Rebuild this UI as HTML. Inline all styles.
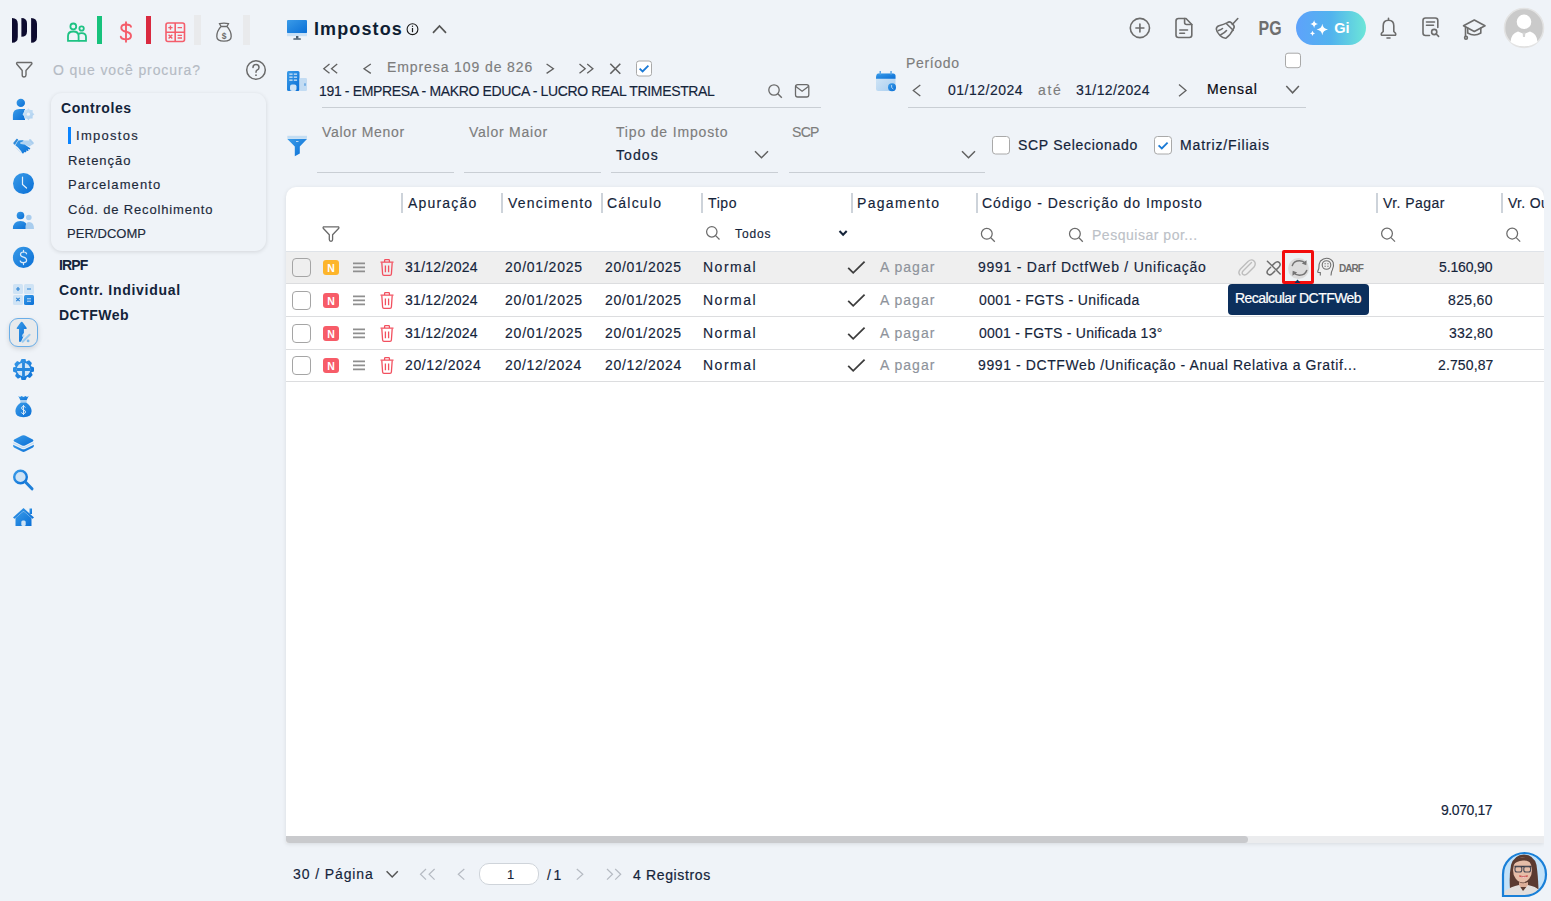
<!DOCTYPE html>
<html lang="pt-BR"><head><meta charset="utf-8"><title>Impostos</title>
<style>
html,body{margin:0;padding:0;}
body{width:1551px;height:901px;overflow:hidden;background:#eff3f8;position:relative;font-family:"Liberation Sans",sans-serif;}
.t{position:absolute;white-space:nowrap;line-height:1;}
.a{position:absolute;}
svg{position:absolute;overflow:visible;}
</style></head><body>
<!-- sidebar dropdown card -->
<div class="a" style="left:51px;top:93px;width:215px;height:158px;border-radius:11px;background:#eff3f8;box-shadow:0 1px 4px rgba(0,0,0,0.12)"></div>
<div class="a" style="left:68px;top:127px;width:3px;height:17px;background:#0a84ff"></div>
<!-- selected left icon box -->
<div class="a" style="left:9px;top:318px;width:27px;height:27px;border:1.3px solid #6aaee8;border-radius:9px;background:#e8eaec;box-shadow:0 2px 5px rgba(0,0,0,0.13)"></div>

<!-- table card -->
<div class="a" style="left:286px;top:187px;width:1258px;height:656px;background:#fff;border-radius:10px 10px 0 0;box-shadow:0 1px 4px rgba(0,0,0,0.10)"></div>
<div class="a" style="left:286px;top:251px;width:1258px;height:1px;background:#dfe3e8"></div>
<div class="a" style="left:286px;top:252px;width:1258px;height:31px;background:#efefef"></div>
<div class="a" style="left:286px;top:283px;width:1258px;height:1px;background:#dcdddf"></div>
<div class="a" style="left:286px;top:316px;width:1258px;height:1px;background:#dcdddf"></div>
<div class="a" style="left:286px;top:349px;width:1258px;height:1px;background:#dcdddf"></div>
<div class="a" style="left:286px;top:381px;width:1258px;height:1px;background:#dcdddf"></div>
<!-- scrollbar -->
<div class="a" style="left:286px;top:836px;width:1258px;height:7px;background:#ebecee"></div>
<div class="a" style="left:286px;top:836px;width:962px;height:7px;background:#c9cacd;border-radius:0 4px 4px 4px"></div>
<!-- column separators -->
<div class="a" style="left:401px;top:193px;width:2px;height:20px;background:#cdd3da"></div>
<div class="a" style="left:501px;top:193px;width:2px;height:20px;background:#cdd3da"></div>
<div class="a" style="left:601px;top:193px;width:2px;height:20px;background:#cdd3da"></div>
<div class="a" style="left:701px;top:193px;width:2px;height:20px;background:#cdd3da"></div>
<div class="a" style="left:851px;top:193px;width:2px;height:20px;background:#cdd3da"></div>
<div class="a" style="left:976px;top:193px;width:2px;height:20px;background:#cdd3da"></div>
<div class="a" style="left:1376px;top:193px;width:2px;height:20px;background:#cdd3da"></div>
<div class="a" style="left:1501px;top:193px;width:2px;height:20px;background:#cdd3da"></div>

<!-- underlines -->
<div class="a" style="left:322px;top:107px;width:499px;height:1px;background:#c9ced4"></div>
<div class="a" style="left:908px;top:107px;width:398px;height:1px;background:#c9ced4"></div>
<div class="a" style="left:317px;top:172px;width:137px;height:1px;background:#c9ced4"></div>
<div class="a" style="left:464px;top:172px;width:137px;height:1px;background:#c9ced4"></div>
<div class="a" style="left:611px;top:172px;width:167px;height:1px;background:#c9ced4"></div>
<div class="a" style="left:789px;top:172px;width:196px;height:1px;background:#c9ced4"></div>

<!-- tooltip -->
<div class="a" style="left:1228px;top:284px;width:141px;height:31px;background:#0c2f5c;border-radius:4px"></div>
<!-- red box -->
<div class="a" style="left:1282px;top:250px;width:26px;height:28px;border:3px solid #f20c0c;border-radius:2px;background:#eef2f4"></div>
<div class="a" style="left:1288px;top:258px;width:21px;height:21px;border-radius:50%;background:#dcdcdc"></div>

<!-- footer input -->
<div class="a" style="left:479px;top:863px;width:58px;height:20px;border:1px solid #cfd4da;border-radius:10px;background:#fff"></div>
<!-- avatar bubble -->
<svg style="left:1501px;top:851px" width="47" height="47" viewBox="0 0 47 47">
<defs><clipPath id="bub"><path d="M2 45 L2 23.5 A21.5 21.5 0 1 1 23.5 45 Z"/></clipPath></defs>
<path d="M2 45 L2 23.5 A21.5 21.5 0 1 1 23.5 45 Z" fill="#c2e2f9"/>
<g clip-path="url(#bub)">
<path d="M9 38 Q8 25 10 14 Q13 4 23 3.5 Q33 4 35.5 14 Q37 24 37.5 38 L30 40 L15 40 Z" fill="#5b3b31"/>
<ellipse cx="21.5" cy="19" rx="9.5" ry="12.5" fill="#e6bda8"/>
<path d="M12 12 Q15 6 23 6.5 Q31 7 32 14 Q28 9 22 9.5 Q15 10 12 14 Z" fill="#5b3b31"/>
<path d="M13.5 15.5 L30.5 15.5" stroke="#3b3b45" stroke-width="1.3"/>
<rect x="14" y="15.5" width="6.8" height="5.5" rx="2" fill="none" stroke="#4a4a55" stroke-width="1.1"/>
<rect x="22.8" y="15.5" width="6.8" height="5.5" rx="2" fill="none" stroke="#4a4a55" stroke-width="1.1"/>
<path d="M18.5 25 Q22 28 26.5 25 Q22 26.2 18.5 25 Z" fill="#c43a3a" stroke="#c43a3a" stroke-width="1"/>
<path d="M19.5 25.4 Q22 26.3 25.5 25.4 L25 26.3 Q22 27 20 26.3 Z" fill="#fff"/>
<path d="M18 31 Q22 33.5 27 31 L27 36 L18 36 Z" fill="#dcae98"/>
<path d="M2 47 L4 40 Q10 35.5 18 34 L22 40 L27 34 Q35 35.5 38 39 L40 47 Z" fill="#e2dedc"/>
</g>
<path d="M2 45 L2 23.5 A21.5 21.5 0 1 1 23.5 45 Z" fill="none" stroke="#1a80d8" stroke-width="2.2"/>
</svg>
<!-- ============ ICONS ============ -->
<svg style="left:0;top:0" width="1551" height="901" viewBox="0 0 1551 901">
<defs>
<linearGradient id="bl" x1="0" y1="0" x2="1" y2="1"><stop offset="0" stop-color="#3a9be8"/><stop offset="1" stop-color="#0a6fd6"/></linearGradient>
<linearGradient id="lb" x1="0" y1="0" x2="1" y2="1"><stop offset="0" stop-color="#d6e8f7"/><stop offset="1" stop-color="#a8cdef"/></linearGradient>
<linearGradient id="gi" x1="0" y1="0" x2="1" y2="0"><stop offset="0" stop-color="#5ea2fb"/><stop offset="0.5" stop-color="#52b3ee"/><stop offset="1" stop-color="#6ce6d8"/></linearGradient>
</defs>
<!-- logo -->
<g fill="#0c0a2e">
<path d="M12 18 Q17.8 18 17.8 24 L17.8 37 Q17.8 42.8 12 42.8 Z"/>
<path d="M21.4 18 Q27 18 27 23.5 L27 31.5 Q27 36.8 21.4 36.8 Z"/>
<path d="M31.1 18 Q37 18 37 24 L37 37 Q37 42.8 31.1 42.8 Z"/>
</g>
<!-- people green -->
<g fill="none" stroke="#1ec283" stroke-width="1.8">
<circle cx="73.3" cy="26.4" r="2.9"/>
<circle cx="81.6" cy="28.5" r="2.2"/>
<path d="M68 40.8 L68 36 Q68 31.5 73.3 31.5 Q78.6 31.5 78.6 36 L78.6 40.8 Z"/>
<path d="M78.6 40.8 L86 40.8 L86 37 Q86 33.2 81.6 33.2 Q79.5 33.2 78.6 34.3"/>
</g>
<rect x="97" y="16" width="5" height="28" fill="#17c27c"/>
<!-- dollar -->
<g fill="none" stroke="#f45d6b" stroke-width="1.9" stroke-linecap="round">
<path d="M131 26.8 Q130.5 24.5 126 24.5 Q121.3 24.5 121.3 27.8 Q121.3 30.8 126 31.8 Q131 32.8 131 36 Q131 39.3 126 39.3 Q121.3 39.3 120.8 36.8"/>
<path d="M126 22.3 L126 41.8"/>
</g>
<rect x="146" y="16" width="5" height="28" fill="#d9293f"/>
<!-- calculator -->
<g fill="none" stroke="#f45d6b" stroke-width="1.6">
<rect x="166" y="23" width="18.5" height="18.5" rx="2"/>
<path d="M175.2 23 L175.2 41.5 M166 32.2 L184.5 32.2"/>
</g>
<g stroke="#f45d6b" stroke-width="1.4">
<path d="M168.3 27.6 L172.6 27.6 M170.45 25.5 L170.45 29.7 M177.6 27.6 L182 27.6 M168.6 34.8 L172.3 38.5 M172.3 34.8 L168.6 38.5 M177.6 35.4 L182 35.4 M177.6 38 L182 38"/>
</g>
<rect x="194" y="15" width="7" height="30" fill="#e9eaec"/>
<rect x="243" y="15" width="7" height="30" fill="#e9eaec"/>
<!-- money bag gray -->
<g fill="none" stroke="#6b6b6b" stroke-width="1.3">
<path d="M221 26.5 L219.5 23.6 Q224 22.5 228.5 23.6 L227 26.5"/>
<path d="M221 26.5 L227 26.5 M221 26.5 Q216.8 31 216.8 36.5 Q216.8 41.2 224 41.2 Q231.2 41.2 231.2 36.5 Q231.2 31 227 26.5"/>
</g>
<text x="224" y="38.6" font-family="Liberation Sans" font-size="8.5" font-weight="700" fill="#6b6b6b" text-anchor="middle">$</text>
<!-- filter outline -->
<path d="M17 62.5 L31.5 62.5 Q32.3 63 31.8 64 L26 70.5 L26 75 Q26 76.8 24 77 Q22.2 77 22.2 75 L22.2 70.5 L16.7 64 Q16.2 63 17 62.5 Z" fill="none" stroke="#6a6a6a" stroke-width="1.4" stroke-linejoin="round"/>
<!-- help circle -->
<circle cx="256" cy="70" r="9.3" fill="none" stroke="#6a6a6a" stroke-width="1.5"/>
<path d="M253 67.6 Q253 64.6 256 64.6 Q259 64.6 259 67.4 Q259 69.2 257 70.2 Q256 70.8 256 72.3" fill="none" stroke="#6a6a6a" stroke-width="1.5" stroke-linecap="round"/>
<circle cx="256" cy="75.2" r="0.9" fill="#6a6a6a"/>

<!-- left column icons -->
<g>
<circle cx="20.8" cy="102.9" r="4.2" fill="url(#bl)"/>
<path d="M12.9 120 L12.9 115 Q12.9 109 19.5 109 L25 109 L25 120 Z" fill="url(#bl)"/>
<g transform="translate(28.4 114.2)"><circle r="4.6" fill="url(#lb)" stroke="#eff3f8" stroke-width="1"/><path d="M0 -6 L1.5 -4.2 L4.2 -4.2 L4.2 -1.5 L6 0 L4.2 1.5 L4.2 4.2 L1.5 4.2 L0 6 L-1.5 4.2 L-4.2 4.2 L-4.2 1.5 L-6 0 L-4.2 -1.5 L-4.2 -4.2 L-1.5 -4.2 Z" fill="url(#lb)"/><circle r="1.6" fill="#eff3f8"/></g>
</g>
<!-- handshake -->
<g>
<path d="M13.2 143 L16.6 138.8 Q17.6 138.6 18.2 139.8 L15.2 144.6 Q14 145.2 13.2 143 Z" fill="#2f8ad9"/>
<path d="M29.3 139.2 Q30 138.6 30.8 139.4 L33.8 142.8 Q34 143.8 32.8 144.6 L29.2 141.2 Z" fill="#a9cdee"/>
<path d="M20 142.4 L23 140.6 L29.2 140.6 L32.8 144.2 L29.5 146.6 L24.4 144.6 L20.5 143.8 Z" fill="#b3d3f0"/>
<path d="M15.3 145.2 L18.3 140.6 Q19.5 140 23.3 140.3 Q23.8 141.2 22.5 141.6 L20.2 142.6 Q19.8 143.6 21 143.9 L24.6 144.4 L30.2 148.2 Q30.6 149.2 29.4 149.4 L27.8 148.8 L28.6 150.2 Q28.2 151.2 27 150.8 L26 150.4 L26.4 151.8 Q25.8 152.6 24.6 152.2 L24 152 Q24 153.6 22.8 153.6 Q22 153.4 21.2 151.2 L18 147.6 Z" fill="url(#bl)"/>
<path d="M15.8 147.6 L18 150 M17.2 149.2 L19.6 151.6 M18.8 150.6 L21 152.6" stroke="#cfe3f5" stroke-width="1"/>
</g>
<!-- clock -->
<circle cx="23.5" cy="183.5" r="10.5" fill="url(#bl)"/>
<path d="M22.5 177 L22.5 184.5 L26.5 188" fill="none" stroke="#e6f0fa" stroke-width="1.2" stroke-linecap="round"/>
<!-- people -->
<circle cx="20.5" cy="215.5" r="3.8" fill="url(#bl)"/>
<path d="M12.9 229 Q12.9 221 20.5 221 Q27.5 221 27.5 229 Z" fill="url(#bl)"/>
<circle cx="28.8" cy="217.5" r="2.8" fill="#a9cdee"/>
<path d="M25.5 229 Q25 222 29 222 Q34 222 34 229 Z" fill="#a9cdee"/>
<!-- dollar circle -->
<circle cx="23.5" cy="257.4" r="10.6" fill="url(#bl)"/>
<g fill="none" stroke="#deebf8" stroke-width="1.2" stroke-linecap="round"><path d="M26.6 253.8 Q26.2 252 23.5 252 Q20.5 252 20.5 254.4 Q20.5 256.4 23.5 257.2 Q26.6 258 26.6 260.3 Q26.6 262.7 23.5 262.7 Q20.6 262.7 20.2 260.8"/><path d="M23.5 250.3 L23.5 252 M23.5 262.7 L23.5 264.6"/></g>
<!-- calc grid -->
<rect x="13" y="284" width="10" height="10" rx="1.5" fill="#cfe3f5"/>
<rect x="24" y="284" width="10" height="10" rx="1.5" fill="#cfe3f5"/>
<rect x="13" y="295" width="10" height="10" rx="1.5" fill="#cfe3f5"/>
<rect x="24" y="295" width="10" height="10" rx="1.5" fill="url(#bl)"/>
<path d="M16 289 L20 289 M18 287 L18 291 M27 289 L31 289 M16.3 297.8 L19.7 301.2 M19.7 297.8 L16.3 301.2" stroke="#2f86d8" stroke-width="1.2"/>
<path d="M27 298.8 L31 298.8 M27 301.2 L31 301.2" stroke="#cfe3f5" stroke-width="1"/>
<!-- arrow percent -->
<path d="M21.7 321.8 Q22.3 321.8 23 322.8 L26.6 327.8 Q27.2 329 26 329 L23.9 329 L23.9 333 L22.6 334.5 L23.6 336 L21 341.8 L19 341.8 L19 329 L17.4 329 Q16.2 329 16.8 327.8 L20.4 322.8 Q21 321.8 21.7 321.8 Z" fill="url(#bl)"/>
<path d="M22.6 341.8 L29.6 334.7" stroke="#9ccbee" stroke-width="2" stroke-linecap="round"/>
<circle cx="23.2" cy="335.8" r="1.2" fill="#b7d8f2"/><circle cx="28.1" cy="340.9" r="1.4" fill="#7db9ea"/>
<!-- gear plus -->
<g transform="translate(23.5 369.5)">
<path d="M-2 -10.5 L2 -10.5 L2.6 -8 L5.6 -9.2 L8.4 -6.4 L7.2 -3.6 L10.5 -2 L10.5 2 L7.8 2.7 L9.2 5.6 L6.4 8.4 L3.6 7.2 L2 10.5 L-2 10.5 L-2.7 7.8 L-5.6 9.2 L-8.4 6.4 L-7.2 3.6 L-10.5 2 L-10.5 -2 L-7.8 -2.7 L-9.2 -5.6 L-6.4 -8.4 L-3.6 -7.2 Z" fill="url(#bl)"/>
<circle r="6.8" fill="#d3e6f7"/>
<path d="M0 -6.8 L0 6.8 M-6.8 0 L6.8 0" stroke="#2787dd" stroke-width="2.8"/>
</g>
<!-- money bag blue -->
<path d="M18.3 396 L20 397 L21.5 396 L23.5 397 L25.5 396 L27 397 L28.7 396 L26.6 400.3 L20.4 400.3 Z" fill="url(#bl)"/>
<rect x="20.4" y="400.2" width="6.2" height="2.2" fill="#a9cdee"/>
<path d="M20.8 402.4 L26.2 402.4 Q31.6 406.5 31.6 411 Q31.6 417.2 23.5 417.2 Q15.4 417.2 15.4 411 Q15.4 406.5 20.8 402.4 Z" fill="url(#bl)"/>
<g fill="none" stroke="#d7e8f7" stroke-width="1"><path d="M25.4 407.5 Q25 406.4 23.5 406.4 Q21.6 406.4 21.6 408 Q21.6 409.4 23.5 409.9 Q25.5 410.4 25.5 412 Q25.5 413.6 23.5 413.6 Q21.6 413.6 21.4 412.4"/><path d="M23.5 405 L23.5 415"/></g>
<!-- layers -->
<path d="M22 435.6 Q23.5 434.9 25 435.6 L32.8 439.4 Q34.2 440.5 32.8 441.6 L25 445.4 Q23.5 446.1 22 445.4 L14.2 441.6 Q12.8 440.5 14.2 439.4 Z" fill="url(#bl)"/>
<path d="M13.4 442.2 L22 446.4 Q23.5 447.1 25 446.4 L33.6 442.2 L33.8 443.6 L25 448 Q23.5 448.7 22 448 L13.2 443.6 Z" fill="#c3dcf3"/>
<path d="M13.2 444.8 L22 449 Q23.5 449.7 25 449 L33.8 444.8 Q34.4 446.6 33 447.6 L25 451.6 Q23.5 452.4 22 451.6 L14 447.6 Q12.6 446.6 13.2 444.8 Z" fill="url(#bl)"/>
<!-- search -->
<circle cx="20.5" cy="477" r="6.3" fill="#cfe3f5" stroke="url(#bl)" stroke-width="2.4"/>
<path d="M25.2 481.8 L32 488.8" stroke="#1f7fd8" stroke-width="3" stroke-linecap="round"/>
<!-- home -->
<path d="M13 517.5 L23.5 508 L34 517.5 L32.5 518.8 L23.5 511 L14.5 518.8 Z" fill="url(#bl)"/>
<rect x="29.5" y="508.5" width="2.5" height="5.5" fill="url(#bl)"/>
<path d="M15.5 518 L23.5 511.2 L31.5 518 L31.5 526 L15.5 526 Z" fill="url(#bl)"/>
<rect x="21.3" y="520.5" width="4.4" height="5.5" rx="1.5" fill="#cfe3f5"/>

<!-- ===== header ===== -->
<rect x="287" y="20" width="20" height="13.2" rx="1" fill="url(#bl)"/>
<rect x="287" y="33.2" width="20" height="3" fill="#c9e0f5"/>
<rect x="296" y="36" width="2.4" height="2.6" fill="#4d6070"/>
<rect x="293.3" y="38.2" width="7.6" height="1.6" rx="0.6" fill="#4d6070"/>
<!-- info -->
<circle cx="412.5" cy="29.2" r="5.4" fill="none" stroke="#1a1a1a" stroke-width="1.1"/>
<path d="M412.5 28 L412.5 32.2" stroke="#1a1a1a" stroke-width="1.2"/><circle cx="412.5" cy="26.3" r="0.7" fill="#1a1a1a"/>
<!-- chevron up -->
<path d="M433 32.8 L439.5 26 L446 32.8" fill="none" stroke="#555" stroke-width="1.7"/>
<!-- building -->
<rect x="287" y="71" width="12.5" height="20" rx="1.5" fill="url(#bl)"/>
<rect x="299.5" y="78" width="7.5" height="13" rx="1.3" fill="#c3dcf3"/>
<g fill="#cfe3f5"><rect x="289.3" y="73.5" width="3.3" height="1.3"/><rect x="293.8" y="73.5" width="3.3" height="1.3"/><rect x="289.3" y="76.5" width="3.3" height="1.3"/><rect x="293.8" y="76.5" width="3.3" height="1.3"/><rect x="289.3" y="79.5" width="3.3" height="1.3"/><rect x="293.8" y="79.5" width="3.3" height="1.3"/></g>
<rect x="290" y="84.5" width="6.5" height="6.5" rx="2" fill="#cfe3f5"/>
<rect x="304.5" y="83.3" width="1" height="2.5" fill="#2f86d8"/>
<!-- nav arrows -->
<g fill="none" stroke="#606060" stroke-width="1.3">
<path d="M329.5 64 L323.8 68.7 L329.5 73.3 M337.2 64 L331.5 68.7 L337.2 73.3"/>
<path d="M370.8 64 L364 68.7 L370.8 73.4"/>
<path d="M546.6 64 L553.4 68.7 L546.6 73.4"/>
<path d="M579.5 64 L585.2 68.7 L579.5 73.3 M587.2 64 L592.9 68.7 L587.2 73.3"/>
<path d="M610.3 63.8 L620.3 73.8 M620.3 63.8 L610.3 73.8" stroke-width="1.6"/>
</g>
<rect x="636.5" y="61" width="15" height="15" rx="2.5" fill="#fff" stroke="#a9a9a9" stroke-width="1"/>
<path d="M639.6 68.6 L642.6 71.4 L648.4 65.6" fill="none" stroke="#1a7ad6" stroke-width="1.8"/>
<!-- search/mail -->
<circle cx="774" cy="90" r="5.2" fill="none" stroke="#6a6a6a" stroke-width="1.3"/>
<path d="M777.8 93.8 L781.8 97.8" stroke="#6a6a6a" stroke-width="1.4"/>
<rect x="795.5" y="84.6" width="13.3" height="12.4" rx="2.2" fill="none" stroke="#6a6a6a" stroke-width="1.3"/>
<path d="M795.8 86.4 L802.1 91.2 L808.4 86.4" fill="none" stroke="#6a6a6a" stroke-width="1.3"/>
<!-- calendar -->
<rect x="876" y="73.5" width="19.5" height="17.5" rx="2" fill="url(#lb)"/>
<path d="M876 78 Q876 73.5 878.5 73.5 L893 73.5 Q895.5 73.5 895.5 76 L895.5 78.8 L876 78.8 Z" fill="url(#bl)"/>
<rect x="879.5" y="71" width="1.5" height="3.5" fill="#5aa6e6"/><rect x="890.3" y="71" width="1.5" height="3.5" fill="#5aa6e6"/>
<circle cx="892" cy="87.2" r="4" fill="url(#bl)"/>
<path d="M891.6 85 L891.6 87.5 L893.3 89" fill="none" stroke="#cfe3f5" stroke-width="0.8"/>
<!-- period controls -->
<rect x="1285.5" y="53.2" width="15" height="14.5" rx="2.5" fill="#fff" stroke="#a9a9a9" stroke-width="1"/>
<g fill="none" stroke="#606060" stroke-width="1.3">
<path d="M920.3 85 L913.3 90.5 L920.3 96"/>
<path d="M1179 84.6 L1186 90.4 L1179 96.2"/>
<path d="M1286.3 86 L1292.6 92.8 L1298.9 86" stroke-width="1.5"/>
<path d="M755 151.2 L761.5 157.8 L768 151.2" stroke-width="1.5"/>
<path d="M962 151.2 L968.5 157.8 L975 151.2" stroke-width="1.5"/>
</g>
<!-- funnel blue -->
<path d="M287.3 139 L307 139 L299.8 146.5 L299.8 153.6 L294.8 156.2 L294.8 146.5 Z" fill="url(#bl)"/>
<rect x="287.3" y="135.8" width="19.7" height="3" fill="#c3ddf3"/>
<rect x="296" y="141" width="2.5" height="0.9" fill="#cfe3f5"/>
<!-- checkboxes -->
<rect x="992.5" y="136.5" width="17" height="17.5" rx="3" fill="#fff" stroke="#a9a9a9" stroke-width="1"/>
<rect x="1154.5" y="136.5" width="17" height="17.5" rx="3" fill="#fff" stroke="#a9a9a9" stroke-width="1"/>
<path d="M1158.6 145.4 L1161.8 148.5 L1167.6 142.6" fill="none" stroke="#1a7ad6" stroke-width="1.8"/>

<!-- right header icons -->
<g fill="none" stroke="#6c6c6c" stroke-width="1.6" stroke-linecap="round" stroke-linejoin="round">
<circle cx="1139.9" cy="28" r="9.6"/>
<path d="M1139.9 24 L1139.9 32 M1135.9 28 L1143.9 28"/>
<path d="M1182 18.5 L1186 18.5 L1191.8 24.5 L1191.8 35 Q1191.8 37.5 1189.3 37.5 L1178.5 37.5 Q1176 37.5 1176 35 L1176 21 Q1176 18.5 1178.5 18.5 Z"/>
<path d="M1184.6 18.5 L1184.6 22.5 Q1184.6 24.5 1186.6 24.5 L1191.8 24.5"/>
<path d="M1179.8 30 L1187.5 30 M1179.8 33.2 L1184.5 33.2"/>
<!-- broom -->
<path d="M1232.3 24.5 L1237.8 18.5"/>
<path d="M1227.5 22.6 Q1229.3 21 1231.2 22.6 L1233.5 25 Q1235 27 1233.3 29 Q1230.5 35 1226 38.2 Q1223 38.5 1220 35.5 Q1216.5 32 1216.3 29 Q1216.5 26.5 1219 25.8 Q1223.5 24.5 1227.5 22.6 Z"/>
<path d="M1226.3 23.5 L1233.2 30.3 M1218.5 30.6 Q1221 29.8 1222.5 28.5 M1220.8 34.8 Q1224.5 33 1226.5 30.5"/>
<!-- bell -->
<path d="M1388.5 18.3 L1388.5 20.2 M1383.2 31.5 L1383.2 25.8 Q1383.2 20.2 1388.5 20.2 Q1393.8 20.2 1393.8 25.8 L1393.8 31.5 L1395.5 33.3 Q1396.3 35.3 1394.5 35.3 L1382.5 35.3 Q1380.7 35.3 1381.5 33.3 Z M1387 38 L1390 38"/>
<!-- doc search -->
<path d="M1437.8 27.5 L1437.8 20.5 Q1437.8 18 1435.3 18 L1425.5 18 Q1423 18 1423 20.5 L1423 33 Q1423 35.5 1425.5 35.5 L1429.5 35.5"/>
<path d="M1426.5 22 L1434.5 22 M1426.5 25.3 L1433.5 25.3"/>
<circle cx="1434.2" cy="32" r="2.6"/><path d="M1436.2 34 L1438.6 36.4"/>
<!-- grad cap -->
<path d="M1463.5 25.8 L1474.3 20 L1485 25.8 L1474.3 31.5 Z"/>
<path d="M1467.7 28 L1467.7 33 Q1474.3 37 1480.8 33 L1480.8 28"/>
<path d="M1465.5 27 L1465.5 36"/><circle cx="1466" cy="37.8" r="1.4"/>
</g>
<text x="1258.6" y="35.2" font-family="Liberation Sans" font-size="20" font-weight="700" fill="#6e6e6e" textLength="23" lengthAdjust="spacingAndGlyphs">PG</text>
<!-- Gi pill -->
<rect x="1296" y="11" width="70" height="34" rx="17" fill="url(#gi)"/>
<path d="M1322.3 23.8 Q1322.9 28.7 1328 29.5 Q1322.9 30.3 1322.3 35.2 Q1321.7 30.3 1316.6 29.5 Q1321.7 28.7 1322.3 23.8 Z" fill="#fff"/>
<path d="M1314.1 20 Q1314.5 23.5 1318 24.1 Q1314.5 24.7 1314.1 28.2 Q1313.7 24.7 1310.2 24.1 Q1313.7 23.5 1314.1 20 Z" fill="#fff"/>
<path d="M1312.5 30.8 Q1312.8 33 1315 33.4 Q1312.8 33.8 1312.5 36 Q1312.2 33.8 1310 33.4 Q1312.2 33 1312.5 30.8 Z" fill="#fff"/>
<text x="1334.2" y="32.8" font-family="Liberation Sans" font-size="14.6" font-weight="700" fill="#fff">Gi</text>
<!-- avatar -->
<circle cx="1524" cy="28" r="19.5" fill="#cacaca" stroke="#e3e3e3" stroke-width="1.6"/>
<circle cx="1524" cy="21.8" r="7.3" fill="#fff"/>
<path d="M1510.5 42 Q1511 33.5 1518 31.5 L1524 34 L1530 31.5 Q1537 33.5 1537.5 42 Q1531 46.5 1524 46.5 Q1517 46.5 1510.5 42 Z" fill="#fff"/>
<path d="M1522.6 32.5 L1525.4 32.5 L1525 37 L1523 37 Z" fill="#d4d4d4"/>
</svg>
<svg style="left:0;top:0" width="1551" height="901" viewBox="0 0 1551 901">
<!-- table filter row -->
<path d="M323.5 226.8 L338.5 226.8 Q339.2 227.3 338.8 228.2 L332.6 234.8 L332.6 239.6 Q332.6 241.3 331 241.4 Q329.3 241.4 329.3 239.6 L329.3 234.8 L323.2 228.2 Q322.8 227.3 323.5 226.8 Z" fill="none" stroke="#6a6a6a" stroke-width="1.3" stroke-linejoin="round"/>
<g fill="none" stroke="#6b6b6b" stroke-width="1.25">
<circle cx="711.8" cy="231.8" r="5.2"/><path d="M715.6 235.6 L719.5 239.5"/>
<circle cx="986.8" cy="233.8" r="5.4"/><path d="M990.8 237.8 L994.8 241.8"/>
<circle cx="1074.9" cy="233.8" r="5.4"/><path d="M1078.9 237.8 L1082.8 241.7"/>
<circle cx="1387" cy="233.6" r="5.4"/><path d="M1391 237.6 L1395 241.6"/>
<circle cx="1512.2" cy="233.6" r="5.4"/><path d="M1516.2 237.6 L1520.2 241.6"/>
</g>
<path d="M839.5 231 L843.1 234.8 L846.7 231" fill="none" stroke="#15243a" stroke-width="2"/>
<!-- row icons -->
<g id="rowicons">
<rect x="292.5" y="258.5" width="18" height="18" rx="3.5" fill="none" stroke="#a5a5a5" stroke-width="1"/>
<rect x="323" y="260" width="16" height="15" rx="3" fill="#fdb52b"/>
<text x="331" y="271.6" font-family="Liberation Sans" font-size="10.5" font-weight="700" fill="#fff" text-anchor="middle">N</text>
<path d="M353 263.4 L365 263.4 M353 267.4 L365 267.4 M353 271.4 L365 271.4" stroke="#8f8f8f" stroke-width="1.8"/>
<g fill="none" stroke="#f2505f" stroke-width="1.3" stroke-linejoin="round">
<path d="M380.5 262.2 L393.5 262.2 M384.6 262 L384.6 260.3 Q384.6 259.6 385.4 259.6 L388.6 259.6 Q389.4 259.6 389.4 260.3 L389.4 262"/>
<path d="M381.8 262.5 L382.6 274 Q382.7 275.4 384 275.4 L390 275.4 Q391.3 275.4 391.4 274 L392.2 262.5"/>
<path d="M385.4 265.5 L385.4 272.3 M388.6 265.5 L388.6 272.3"/>
</g>
<path d="M848.2 267.8 L853.2 272.8 L864.6 261.6" fill="none" stroke="#3d3d3d" stroke-width="1.8"/>
</g>
<g transform="translate(0 33)">
<rect x="292.5" y="258.5" width="18" height="18" rx="3.5" fill="#fff" stroke="#a5a5a5" stroke-width="1"/>
<rect x="323" y="260" width="16" height="15" rx="3" fill="#f75c68"/>
<text x="331" y="271.6" font-family="Liberation Sans" font-size="10.5" font-weight="700" fill="#fff" text-anchor="middle">N</text>
<path d="M353 263.4 L365 263.4 M353 267.4 L365 267.4 M353 271.4 L365 271.4" stroke="#8f8f8f" stroke-width="1.8"/>
<g fill="none" stroke="#f2505f" stroke-width="1.3" stroke-linejoin="round">
<path d="M380.5 262.2 L393.5 262.2 M384.6 262 L384.6 260.3 Q384.6 259.6 385.4 259.6 L388.6 259.6 Q389.4 259.6 389.4 260.3 L389.4 262"/>
<path d="M381.8 262.5 L382.6 274 Q382.7 275.4 384 275.4 L390 275.4 Q391.3 275.4 391.4 274 L392.2 262.5"/>
<path d="M385.4 265.5 L385.4 272.3 M388.6 265.5 L388.6 272.3"/>
</g>
<path d="M848.2 267.8 L853.2 272.8 L864.6 261.6" fill="none" stroke="#3d3d3d" stroke-width="1.8"/>
</g>
<g transform="translate(0 66)">
<rect x="292.5" y="258.5" width="18" height="18" rx="3.5" fill="#fff" stroke="#a5a5a5" stroke-width="1"/>
<rect x="323" y="260" width="16" height="15" rx="3" fill="#f75c68"/>
<text x="331" y="271.6" font-family="Liberation Sans" font-size="10.5" font-weight="700" fill="#fff" text-anchor="middle">N</text>
<path d="M353 263.4 L365 263.4 M353 267.4 L365 267.4 M353 271.4 L365 271.4" stroke="#8f8f8f" stroke-width="1.8"/>
<g fill="none" stroke="#f2505f" stroke-width="1.3" stroke-linejoin="round">
<path d="M380.5 262.2 L393.5 262.2 M384.6 262 L384.6 260.3 Q384.6 259.6 385.4 259.6 L388.6 259.6 Q389.4 259.6 389.4 260.3 L389.4 262"/>
<path d="M381.8 262.5 L382.6 274 Q382.7 275.4 384 275.4 L390 275.4 Q391.3 275.4 391.4 274 L392.2 262.5"/>
<path d="M385.4 265.5 L385.4 272.3 M388.6 265.5 L388.6 272.3"/>
</g>
<path d="M848.2 267.8 L853.2 272.8 L864.6 261.6" fill="none" stroke="#3d3d3d" stroke-width="1.8"/>
</g>
<g transform="translate(0 98)">
<rect x="292.5" y="258.5" width="18" height="18" rx="3.5" fill="#fff" stroke="#a5a5a5" stroke-width="1"/>
<rect x="323" y="260" width="16" height="15" rx="3" fill="#f75c68"/>
<text x="331" y="271.6" font-family="Liberation Sans" font-size="10.5" font-weight="700" fill="#fff" text-anchor="middle">N</text>
<path d="M353 263.4 L365 263.4 M353 267.4 L365 267.4 M353 271.4 L365 271.4" stroke="#8f8f8f" stroke-width="1.8"/>
<g fill="none" stroke="#f2505f" stroke-width="1.3" stroke-linejoin="round">
<path d="M380.5 262.2 L393.5 262.2 M384.6 262 L384.6 260.3 Q384.6 259.6 385.4 259.6 L388.6 259.6 Q389.4 259.6 389.4 260.3 L389.4 262"/>
<path d="M381.8 262.5 L382.6 274 Q382.7 275.4 384 275.4 L390 275.4 Q391.3 275.4 391.4 274 L392.2 262.5"/>
<path d="M385.4 265.5 L385.4 272.3 M388.6 265.5 L388.6 272.3"/>
</g>
<path d="M848.2 267.8 L853.2 272.8 L864.6 261.6" fill="none" stroke="#3d3d3d" stroke-width="1.8"/>
</g>
<!-- row1 action icons -->
<path d="M1251.5 262.5 L1243.5 270.5 Q1241 273 1243 274.5 Q1245 276 1247.5 273.5 L1254 267 Q1256.5 263.5 1254 261 Q1251.5 258.5 1248 261.5 L1240.5 269 Q1237.5 272.5 1240 275" fill="none" stroke="#bdbdbd" stroke-width="1.4" stroke-linecap="round"/>
<g fill="none" stroke="#6e6e6e" stroke-width="1.5" stroke-linecap="round">
<path d="M1267.4 261.2 L1280.2 274"/>
<path d="M1272.4 265.4 L1274.8 263 Q1277.3 260.6 1279.3 262.6 Q1281.3 264.7 1278.8 267.2 L1276.6 269.4 M1270.6 267.3 L1268.4 269.5 Q1265.9 272 1267.9 274 Q1269.9 276 1272.4 273.5 L1274.8 271.1"/>
</g>
<g fill="none" stroke="#747474" stroke-width="1.5" stroke-linecap="round">
<path d="M1292.3 265.5 Q1294 260.8 1299.5 260.8 Q1303 260.8 1305.3 263.3"/>
<path d="M1306.7 270.5 Q1305 275.2 1299.5 275.2 Q1296 275.2 1293.7 272.7"/>
</g>
<path d="M1306.6 260.2 L1306.3 265.3 L1301.8 263.4 Z" fill="#747474"/>
<path d="M1292.4 275.8 L1292.7 270.7 L1297.2 272.6 Z" fill="#747474"/>
<path d="M1294.5 283 L1297.5 279.5 L1300.5 283 Z" fill="#0c2f5c"/>
<g fill="none" stroke="#6e6e6e" stroke-width="1.1">
<path d="M1320.3 275.5 L1320.3 272.5 L1318.4 272.5 Q1317.3 272.3 1317.8 271.2 L1318.8 268.5 Q1318.4 264 1320.5 261 Q1323.3 258.2 1326.5 258.2 Q1331.3 258.2 1333.2 262.5 Q1334.3 266.5 1332.3 270 Q1331 272 1331 275.5"/>
<circle cx="1326.5" cy="265" r="4.3"/>
<path d="M1324.5 263.8 L1325.8 263.8 M1327.3 263.8 L1328.6 263.8 M1324.5 266.3 L1325.8 266.3 M1327.3 266.3 L1328.6 266.3"/>
</g>
<!-- footer -->
<path d="M386.6 871.2 L392.2 877 L397.8 871.2" fill="none" stroke="#555" stroke-width="1.5"/>
<g fill="none" stroke="#b5bac2" stroke-width="1.2">
<path d="M426 869 L420.5 874.3 L426 879.6 M434.6 869 L429.1 874.3 L434.6 879.6"/>
<path d="M464.3 869 L458.3 874.3 L464.3 879.6"/>
<path d="M576.8 869 L582.8 874.3 L576.8 879.6"/>
<path d="M607 869 L612.5 874.3 L607 879.6 M615.2 869 L620.7 874.3 L615.2 879.6"/>
</g>
</svg>

<div class="t" id="t0" style="left:53.00px;top:63px;font-size:14.00px;font-weight:400;-webkit-text-stroke:0.15px #b5bbc4;color:#b5bbc4;letter-spacing:0.900px">O que você procura?</div>
<div class="t" id="t1" style="left:61.00px;top:101px;font-size:14.00px;font-weight:700;color:#13233a;letter-spacing:0.600px">Controles</div>
<div class="t" id="t2" style="left:76.00px;top:129px;font-size:13.00px;font-weight:400;-webkit-text-stroke:0.15px #1d2a3b;color:#1d2a3b;letter-spacing:1.286px">Impostos</div>
<div class="t" id="t3" style="left:68.00px;top:154px;font-size:13.00px;font-weight:400;-webkit-text-stroke:0.15px #1d2a3b;color:#1d2a3b;letter-spacing:0.971px">Retenção</div>
<div class="t" id="t4" style="left:68.00px;top:178px;font-size:13.00px;font-weight:400;-webkit-text-stroke:0.15px #1d2a3b;color:#1d2a3b;letter-spacing:1.082px">Parcelamento</div>
<div class="t" id="t5" style="left:68.00px;top:203px;font-size:13.00px;font-weight:400;-webkit-text-stroke:0.15px #1d2a3b;color:#1d2a3b;letter-spacing:0.832px">Cód. de Recolhimento</div>
<div class="t" id="t6" style="left:67.00px;top:227px;font-size:13.00px;font-weight:400;-webkit-text-stroke:0.15px #1d2a3b;color:#1d2a3b;letter-spacing:0.038px">PER/DCOMP</div>
<div class="t" id="t7" style="left:59.00px;top:258px;font-size:14.00px;font-weight:700;color:#13233a;letter-spacing:-0.833px">IRPF</div>
<div class="t" id="t8" style="left:59.00px;top:283px;font-size:14.00px;font-weight:700;color:#13233a;letter-spacing:0.712px">Contr. Individual</div>
<div class="t" id="t9" style="left:59.00px;top:308px;font-size:14.00px;font-weight:700;color:#13233a;letter-spacing:0.500px">DCTFWeb</div>
<div class="t" id="t10" style="left:314.00px;top:20px;font-size:18.00px;font-weight:700;color:#0f1e33;letter-spacing:1.114px">Impostos</div>
<div class="t" id="t11" style="left:387.00px;top:60px;font-size:14.00px;font-weight:400;-webkit-text-stroke:0.15px #7d7d7d;color:#7d7d7d;letter-spacing:0.900px">Empresa 109 de 826</div>
<div class="t" id="t12" style="left:319.00px;top:84px;font-size:14.00px;font-weight:400;-webkit-text-stroke:0.15px #15243a;color:#15243a;letter-spacing:-0.344px">191 - EMPRESA - MAKRO EDUCA - LUCRO REAL TRIMESTRAL</div>
<div class="t" id="t13" style="left:906.00px;top:56px;font-size:14.00px;font-weight:400;-webkit-text-stroke:0.15px #7d7d7d;color:#7d7d7d;letter-spacing:0.667px">Período</div>
<div class="t" id="t14" style="left:948.00px;top:83px;font-size:14.00px;font-weight:400;-webkit-text-stroke:0.15px #15243a;color:#15243a;letter-spacing:0.500px">01/12/2024</div>
<div class="t" id="t15" style="left:1038.00px;top:83px;font-size:14.00px;font-weight:400;-webkit-text-stroke:0.15px #7d7d7d;color:#7d7d7d;letter-spacing:1.650px">até</div>
<div class="t" id="t16" style="left:1076.00px;top:83px;font-size:14.00px;font-weight:400;-webkit-text-stroke:0.15px #15243a;color:#15243a;letter-spacing:0.389px">31/12/2024</div>
<div class="t" id="t17" style="left:1207.00px;top:82px;font-size:14.00px;font-weight:400;-webkit-text-stroke:0.22px #0a0a14;color:#0a0a14;letter-spacing:0.940px">Mensal</div>
<div class="t" id="t18" style="left:322.00px;top:125px;font-size:14.00px;font-weight:400;-webkit-text-stroke:0.15px #7d7d7d;color:#7d7d7d;letter-spacing:0.690px">Valor Menor</div>
<div class="t" id="t19" style="left:469.00px;top:125px;font-size:14.00px;font-weight:400;-webkit-text-stroke:0.15px #7d7d7d;color:#7d7d7d;letter-spacing:0.760px">Valor Maior</div>
<div class="t" id="t20" style="left:616.00px;top:125px;font-size:14.00px;font-weight:400;-webkit-text-stroke:0.15px #7d7d7d;color:#7d7d7d;letter-spacing:0.829px">Tipo de Imposto</div>
<div class="t" id="t21" style="left:792.00px;top:125px;font-size:14.00px;font-weight:400;-webkit-text-stroke:0.15px #7d7d7d;color:#7d7d7d;letter-spacing:-0.700px">SCP</div>
<div class="t" id="t22" style="left:616.00px;top:148px;font-size:14.00px;font-weight:400;-webkit-text-stroke:0.22px #15243a;color:#15243a;letter-spacing:1.100px">Todos</div>
<div class="t" id="t23" style="left:1018.00px;top:138px;font-size:14.00px;font-weight:400;-webkit-text-stroke:0.22px #15243a;color:#15243a;letter-spacing:0.700px">SCP Selecionado</div>
<div class="t" id="t24" style="left:1180.00px;top:138px;font-size:14.00px;font-weight:400;-webkit-text-stroke:0.22px #15243a;color:#15243a;letter-spacing:0.862px">Matriz/Filiais</div>
<div class="t" id="t25" style="left:408.00px;top:196px;font-size:14.00px;font-weight:400;-webkit-text-stroke:0.15px #15243a;color:#15243a;letter-spacing:1.200px">Apuração</div>
<div class="t" id="t26" style="left:508.00px;top:196px;font-size:14.00px;font-weight:400;-webkit-text-stroke:0.15px #15243a;color:#15243a;letter-spacing:1.222px">Vencimento</div>
<div class="t" id="t27" style="left:607.00px;top:196px;font-size:14.00px;font-weight:400;-webkit-text-stroke:0.15px #15243a;color:#15243a;letter-spacing:1.217px">Cálculo</div>
<div class="t" id="t28" style="left:708.00px;top:196px;font-size:14.00px;font-weight:400;-webkit-text-stroke:0.15px #15243a;color:#15243a;letter-spacing:0.600px">Tipo</div>
<div class="t" id="t29" style="left:857.00px;top:196px;font-size:14.00px;font-weight:400;-webkit-text-stroke:0.15px #15243a;color:#15243a;letter-spacing:1.312px">Pagamento</div>
<div class="t" id="t30" style="left:982.00px;top:196px;font-size:14.00px;font-weight:400;-webkit-text-stroke:0.15px #15243a;color:#15243a;letter-spacing:0.982px">Código - Descrição do Imposto</div>
<div class="t" id="t31" style="left:1383.00px;top:196px;font-size:14.00px;font-weight:400;-webkit-text-stroke:0.15px #15243a;color:#15243a;letter-spacing:0.438px">Vr. Pagar</div>
<div class="t" id="t32" style="left:1508.00px;top:196px;font-size:14.00px;font-weight:400;-webkit-text-stroke:0.15px #15243a;color:#15243a;letter-spacing:0.300px">Vr. Ou</div>
<div class="t" id="t33" style="left:735.00px;top:228px;font-size:12.00px;font-weight:400;-webkit-text-stroke:0.15px #15243a;color:#15243a;letter-spacing:0.900px">Todos</div>
<div class="t" id="t34" style="left:1092.00px;top:228px;font-size:14.00px;font-weight:400;-webkit-text-stroke:0.15px #bcc1c7;color:#bcc1c7;letter-spacing:0.520px">Pesquisar por...</div>
<div class="t" id="t35" style="left:405.00px;top:260px;font-size:14.00px;font-weight:400;-webkit-text-stroke:0.15px #15243a;color:#15243a;letter-spacing:0.278px">31/12/2024</div>
<div class="t" id="t36" style="left:505.00px;top:260px;font-size:14.00px;font-weight:400;-webkit-text-stroke:0.15px #15243a;color:#15243a;letter-spacing:0.778px">20/01/2025</div>
<div class="t" id="t37" style="left:605.00px;top:260px;font-size:14.00px;font-weight:400;-webkit-text-stroke:0.15px #15243a;color:#15243a;letter-spacing:0.667px">20/01/2025</div>
<div class="t" id="t38" style="left:703.00px;top:260px;font-size:14.00px;font-weight:400;-webkit-text-stroke:0.15px #15243a;color:#15243a;letter-spacing:1.500px">Normal</div>
<div class="t" id="t39" style="left:880.00px;top:260px;font-size:14.00px;font-weight:400;-webkit-text-stroke:0.15px #8e939b;color:#8e939b;letter-spacing:1.017px">A pagar</div>
<div class="t" id="t40" style="left:978.00px;top:260px;font-size:14.00px;font-weight:400;-webkit-text-stroke:0.15px #15243a;color:#15243a;letter-spacing:0.755px">9991 - Darf DctfWeb / Unificação</div>
<div class="t" id="t41" style="left:1439.00px;top:260px;font-size:14.00px;font-weight:400;-webkit-text-stroke:0.15px #15243a;color:#15243a;letter-spacing:-0.143px">5.160,90</div>
<div class="t" id="t42" style="left:405.00px;top:293px;font-size:14.00px;font-weight:400;-webkit-text-stroke:0.15px #15243a;color:#15243a;letter-spacing:0.278px">31/12/2024</div>
<div class="t" id="t43" style="left:505.00px;top:293px;font-size:14.00px;font-weight:400;-webkit-text-stroke:0.15px #15243a;color:#15243a;letter-spacing:0.778px">20/01/2025</div>
<div class="t" id="t44" style="left:605.00px;top:293px;font-size:14.00px;font-weight:400;-webkit-text-stroke:0.15px #15243a;color:#15243a;letter-spacing:0.667px">20/01/2025</div>
<div class="t" id="t45" style="left:703.00px;top:293px;font-size:14.00px;font-weight:400;-webkit-text-stroke:0.15px #15243a;color:#15243a;letter-spacing:1.500px">Normal</div>
<div class="t" id="t46" style="left:880.00px;top:293px;font-size:14.00px;font-weight:400;-webkit-text-stroke:0.15px #8e939b;color:#8e939b;letter-spacing:1.017px">A pagar</div>
<div class="t" id="t47" style="left:979.00px;top:293px;font-size:14.00px;font-weight:400;-webkit-text-stroke:0.15px #15243a;color:#15243a;letter-spacing:0.386px">0001 - FGTS - Unificada</div>
<div class="t" id="t48" style="left:1448.00px;top:293px;font-size:14.00px;font-weight:400;-webkit-text-stroke:0.15px #15243a;color:#15243a;letter-spacing:0.340px">825,60</div>
<div class="t" id="t49" style="left:405.00px;top:326px;font-size:14.00px;font-weight:400;-webkit-text-stroke:0.15px #15243a;color:#15243a;letter-spacing:0.278px">31/12/2024</div>
<div class="t" id="t50" style="left:505.00px;top:326px;font-size:14.00px;font-weight:400;-webkit-text-stroke:0.15px #15243a;color:#15243a;letter-spacing:0.778px">20/01/2025</div>
<div class="t" id="t51" style="left:605.00px;top:326px;font-size:14.00px;font-weight:400;-webkit-text-stroke:0.15px #15243a;color:#15243a;letter-spacing:0.667px">20/01/2025</div>
<div class="t" id="t52" style="left:703.00px;top:326px;font-size:14.00px;font-weight:400;-webkit-text-stroke:0.15px #15243a;color:#15243a;letter-spacing:1.500px">Normal</div>
<div class="t" id="t53" style="left:880.00px;top:326px;font-size:14.00px;font-weight:400;-webkit-text-stroke:0.15px #8e939b;color:#8e939b;letter-spacing:1.017px">A pagar</div>
<div class="t" id="t54" style="left:979.00px;top:326px;font-size:14.00px;font-weight:400;-webkit-text-stroke:0.15px #15243a;color:#15243a;letter-spacing:0.250px">0001 - FGTS - Unificada 13°</div>
<div class="t" id="t55" style="left:1449.00px;top:326px;font-size:14.00px;font-weight:400;-webkit-text-stroke:0.15px #15243a;color:#15243a;letter-spacing:0.180px">332,80</div>
<div class="t" id="t56" style="left:405.00px;top:358px;font-size:14.00px;font-weight:400;-webkit-text-stroke:0.15px #15243a;color:#15243a;letter-spacing:0.622px">20/12/2024</div>
<div class="t" id="t57" style="left:505.00px;top:358px;font-size:14.00px;font-weight:400;-webkit-text-stroke:0.15px #15243a;color:#15243a;letter-spacing:0.689px">20/12/2024</div>
<div class="t" id="t58" style="left:605.00px;top:358px;font-size:14.00px;font-weight:400;-webkit-text-stroke:0.15px #15243a;color:#15243a;letter-spacing:0.689px">20/12/2024</div>
<div class="t" id="t59" style="left:703.00px;top:358px;font-size:14.00px;font-weight:400;-webkit-text-stroke:0.15px #15243a;color:#15243a;letter-spacing:1.500px">Normal</div>
<div class="t" id="t60" style="left:880.00px;top:358px;font-size:14.00px;font-weight:400;-webkit-text-stroke:0.15px #8e939b;color:#8e939b;letter-spacing:1.017px">A pagar</div>
<div class="t" id="t61" style="left:978.00px;top:358px;font-size:14.00px;font-weight:400;-webkit-text-stroke:0.15px #15243a;color:#15243a;letter-spacing:0.598px">9991 - DCTFWeb /Unificação - Anual Relativa a Gratif...</div>
<div class="t" id="t62" style="left:1438.00px;top:358px;font-size:14.00px;font-weight:400;-webkit-text-stroke:0.15px #15243a;color:#15243a;letter-spacing:0.129px">2.750,87</div>
<div class="t" id="t63" style="left:1339.00px;top:264px;font-size:10.00px;font-weight:700;color:#6f6f6f;letter-spacing:-1.000px">DARF</div>
<div class="t" id="t64" style="left:1235.00px;top:291px;font-size:14.00px;font-weight:400;-webkit-text-stroke:0.22px #ffffff;color:#ffffff;letter-spacing:-0.547px">Recalcular DCTFWeb</div>
<div class="t" id="t65" style="left:1441.00px;top:803px;font-size:14.00px;font-weight:400;-webkit-text-stroke:0.15px #15243a;color:#15243a;letter-spacing:-0.414px">9.070,17</div>
<div class="t" id="t66" style="left:293.00px;top:867px;font-size:14.00px;font-weight:400;-webkit-text-stroke:0.15px #15243a;color:#15243a;letter-spacing:0.900px">30 / Página</div>
<div class="t" id="t67" style="left:507.00px;top:868px;font-size:13.00px;font-weight:400;-webkit-text-stroke:0.15px #15243a;color:#15243a;letter-spacing:0.000px">1</div>
<div class="t" id="t68" style="left:547.00px;top:868px;font-size:14.00px;font-weight:400;-webkit-text-stroke:0.15px #15243a;color:#15243a;letter-spacing:-0.600px">/ 1</div>
<div class="t" id="t69" style="left:633.00px;top:868px;font-size:14.00px;font-weight:400;-webkit-text-stroke:0.22px #15243a;color:#15243a;letter-spacing:0.640px">4 Registros</div>
<div class="a" style="left:1544px;top:180px;width:7px;height:670px;background:#eff3f8"></div>
</body></html>
